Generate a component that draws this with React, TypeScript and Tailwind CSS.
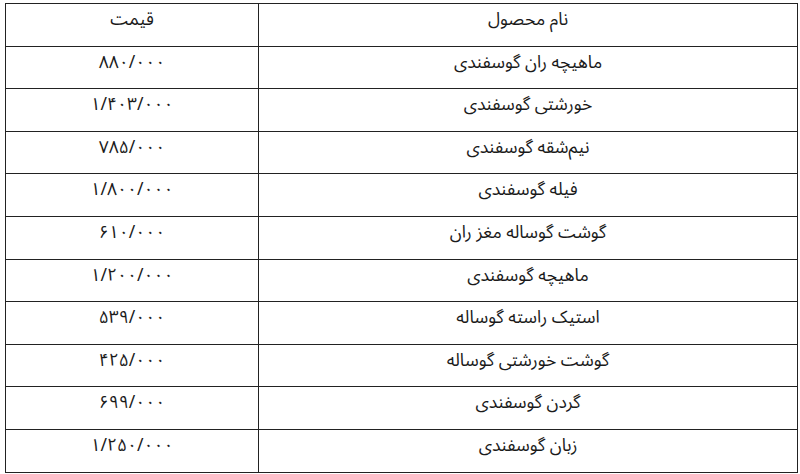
import React from 'react';

const rows = [
  { name: 'ماهیچه ران گوسفندی', price: '۸۸۰/۰۰۰' },
  { name: 'خورشتی گوسفندی', price: '۱/۴۰۳/۰۰۰' },
  { name: 'نیم‌شقه گوسفندی', price: '۷۸۵/۰۰۰' },
  { name: 'فیله گوسفندی', price: '۱/۸۰۰/۰۰۰' },
  { name: 'گوشت گوساله مغز ران', price: '۶۱۰/۰۰۰' },
  { name: 'ماهیچه گوسفندی', price: '۱/۲۰۰/۰۰۰' },
  { name: 'استیک راسته گوساله', price: '۵۳۹/۰۰۰' },
  { name: 'گوشت خورشتی گوساله', price: '۴۲۵/۰۰۰' },
  { name: 'گردن گوسفندی', price: '۶۹۹/۰۰۰' },
  { name: 'زبان گوسفندی', price: '۱/۲۵۰/۰۰۰' },
];

export default function App() {
  return (
    <div className="w-[800px] h-[474px] bg-white pt-[3px] pl-[5px] overflow-hidden font-['Noto_Sans_Arabic','DejaVu_Sans',sans-serif] text-[17.5px] leading-[24px] text-[#1a1a1a]">
      <table dir="rtl" className="w-[792px] border-collapse table-fixed">
        <colgroup>
          <col className="w-[539px]" />
          <col className="w-[253px]" />
        </colgroup>
        <thead>
          <tr>
            <th className="h-[42.6px] border border-[#222] font-normal text-center align-top pt-[4px]">نام محصول</th>
            <th className="h-[42.6px] border border-[#222] font-normal text-center align-top pt-[4px]">قیمت</th>
          </tr>
        </thead>
        <tbody>
          {rows.map((r, i) => (
            <tr key={i}>
              <td className="h-[42.6px] border border-[#222] text-center align-top pt-[4px]">{r.name}</td>
              <td className="h-[42.6px] border border-[#222] text-center align-top pt-[4px]">{r.price}</td>
            </tr>
          ))}
        </tbody>
      </table>
    </div>
  );
}
